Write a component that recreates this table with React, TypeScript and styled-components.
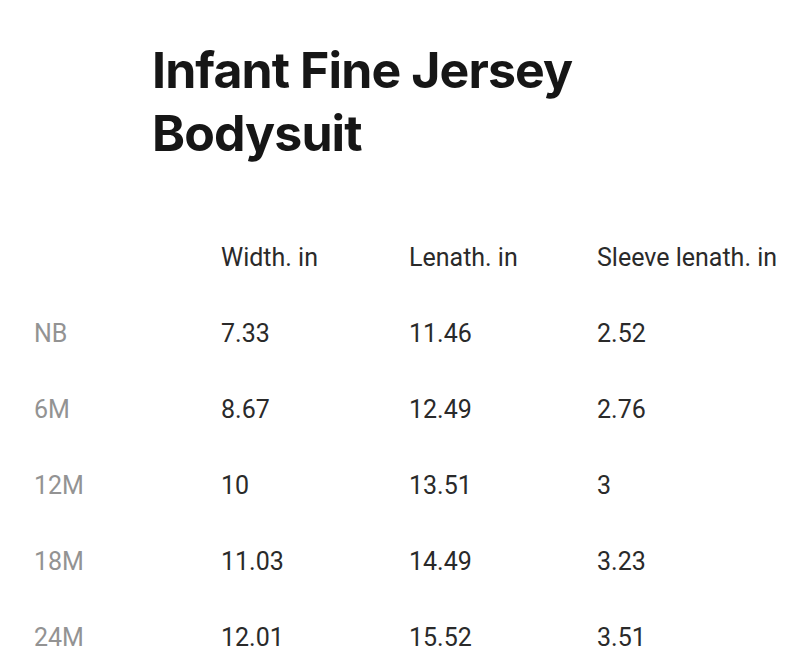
import styled, { createGlobalStyle } from 'styled-components'

const GlobalStyle = createGlobalStyle`
  html, body {
    margin: 0;
    padding: 0;
    background: #ffffff;
  }
`

const Page = styled.div`
  width: 794px;
  min-height: 671px;
  padding-top: 39px;
  box-sizing: border-box;
  font-family: Roboto, 'Liberation Sans', sans-serif;
`

const Title = styled.h1`
  margin: 0 0 55px 152px;
  font-family: Inter, 'Liberation Sans', sans-serif;
  font-weight: 700;
  font-size: 50px;
  line-height: 63px;
  letter-spacing: -0.9px;
  color: #161616;
`

const Table = styled.div`
  display: grid;
  grid-template-columns: 187px 188px 188px 1fr;
  grid-auto-rows: 76px;
  padding-left: 34px;
  align-items: center;
`

const Cell = styled.div<{ $muted?: boolean }>`
  font-size: 25px;
  font-weight: 400;
  line-height: 76px;
  color: ${({ $muted }) => ($muted ? '#939393' : '#2a2a2a')};
  white-space: nowrap;
`

const headers = ['', 'Width. in', 'Lenath. in', 'Sleeve lenath. in']

const rows: [string, string, string, string][] = [
  ['NB', '7.33', '11.46', '2.52'],
  ['6M', '8.67', '12.49', '2.76'],
  ['12M', '10', '13.51', '3'],
  ['18M', '11.03', '14.49', '3.23'],
  ['24M', '12.01', '15.52', '3.51'],
]

export default function App() {
  return (
    <Page>
      <GlobalStyle />
      <Title>
        Infant Fine Jersey
        <br />
        Bodysuit
      </Title>
      <Table>
        {headers.map((h, i) => (
          <Cell key={'h' + i}>{h}</Cell>
        ))}
        {rows.map((r) =>
          r.map((v, i) => (
            <Cell key={r[0] + i} $muted={i === 0}>
              {v}
            </Cell>
          ))
        )}
      </Table>
    </Page>
  )
}
